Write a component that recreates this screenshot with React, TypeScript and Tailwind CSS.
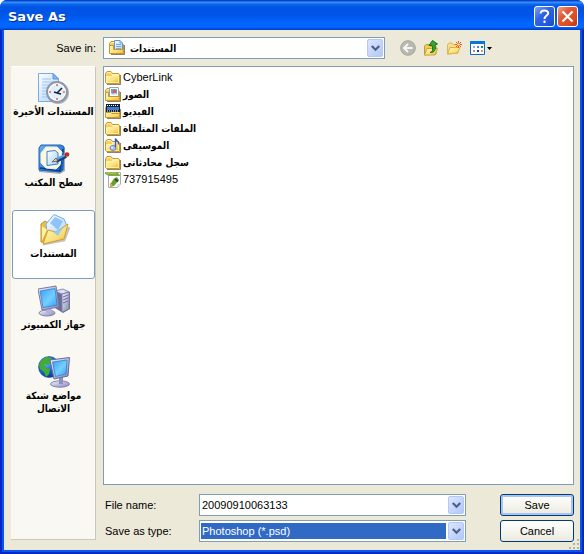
import React from "react";

const UI = "font-['Liberation_Sans','DejaVu_Sans',sans-serif]";
const ARABIC = "font-['DejaVu_Sans_Condensed','DejaVu_Sans',sans-serif] font-bold text-[10px]";

function Gradients() {
  return (
    <svg width="0" height="0" className="absolute" aria-hidden="true">
      <defs>
        <linearGradient id="folder" x1="0" y1="0" x2="1" y2="1">
          <stop offset="0" stopColor="#fff8c4" />
          <stop offset="0.6" stopColor="#fbe078" />
          <stop offset="1" stopColor="#e9b53a" />
        </linearGradient>
        <linearGradient id="paper" x1="0" y1="0" x2="1" y2="1">
          <stop offset="0" stopColor="#ffffff" />
          <stop offset="1" stopColor="#a9d0fa" />
        </linearGradient>
        <linearGradient id="screen" x1="0" y1="0" x2="1" y2="1">
          <stop offset="0" stopColor="#3d9cf5" />
          <stop offset="0.55" stopColor="#72d0ff" />
          <stop offset="1" stopColor="#3a9df2" />
        </linearGradient>
        <linearGradient id="casing" x1="0" y1="0" x2="1" y2="1">
          <stop offset="0" stopColor="#f4f4ff" />
          <stop offset="1" stopColor="#8284b8" />
        </linearGradient>
        <linearGradient id="desk" x1="0" y1="0" x2="1" y2="1">
          <stop offset="0" stopColor="#69adf0" />
          <stop offset="1" stopColor="#0b5dbd" />
        </linearGradient>
        <radialGradient id="globe" cx="0.35" cy="0.3" r="0.75">
          <stop offset="0" stopColor="#65b8ff" />
          <stop offset="0.6" stopColor="#165fd0" />
          <stop offset="1" stopColor="#08358c" />
        </radialGradient>
      </defs>
    </svg>
  );
}

function FolderBase() {
  return (
    <>
      <path d="M2 14.5H15.5V5" fill="none" stroke="#6b5a30" strokeWidth="1" opacity="0.75" />
      <path d="M.5 12.5V3.5L2 1.5H6L7.5 3.5H13.5L14.5 4.5V13.5H1.5Z" fill="#f5cf60" stroke="#c8962b" />
      <path d="M2 3.5 2.7 2.5H5.6L7 4.5H13" fill="none" stroke="#fff4b8" />
      <path d="M1.5 12.5V6.5H6.5L7.5 5.5H13.5V12.5Z" fill="url(#folder)" stroke="#fff1a5" />
    </>
  );
}

function FolderFront() {
  return (
    <path d="M.5 8.5H5.5L6.5 9.5H14.5V13.5H.5Z" fill="url(#folder)" stroke="#c8962b" />
  );
}

type Kind = "folder" | "documents" | "pictures" | "video" | "music" | "file";

function SmallIcon({ kind }: { kind: Kind }) {
  return (
    <svg width="16" height="16" viewBox="0 0 16 16" aria-hidden="true" className="shrink-0">
      {kind !== "file" && <FolderBase />}
      {kind === "documents" && (
        <>
          <path d="M5.5 10.5V.5H11L13.5 3V10.5Z" fill="url(#paper)" stroke="#5e96d8" />
          <path d="M11 .5V3H13.5M7 4.5H12M7 6.5H12M7 8.5H12" fill="none" stroke="#75aae4" />
          <path d="M.5 13.5V5.5H4.5V9.5H14.5V13.5Z" fill="url(#folder)" stroke="#c8962b" />
        </>
      )}
      {kind === "pictures" && (
        <>
          <path d="M4.5.5H13.5V9.5H4.5Z" fill="#fff" stroke="#9aa3b5" />
          <path d="M6 2H12V8H6Z" fill="#58a9ed" />
          <circle cx="9.5" cy="4.5" r="1.8" fill="#ec5736" />
          <path d="M6 8V6L8 7L10 6L12 7V8Z" fill="#d6eeff" />
          <path d="M.5 13.5V5.5H3.5V9.5H14.5V13.5Z" fill="url(#folder)" stroke="#c8962b" />
        </>
      )}
      {kind === "video" && (
        <>
          <path d="M1 0H15V8H1Z" fill="#17202e" />
          <path d="M2 3H14V6H2Z" fill="#3f79d3" />
          <path d="M2 1.5H14M2 7H14" stroke="#fff" strokeDasharray="1 1" />
          <FolderFront />
        </>
      )}
      {kind === "music" && (
        <>
          <ellipse cx="8" cy="10" rx="3" ry="2.5" fill="#a9bff2" stroke="#5372c9" strokeWidth=".8" />
          <circle cx="7" cy="9.5" r="1" fill="#eef3ff" />
          <path d="M10.5 9V.5C11 3 14.5 3 13.5 6.5" fill="none" stroke="#3759bb" strokeWidth="1.4" />
        </>
      )}
      {kind === "file" && (
        <>
          <path d="M3.5 15.5V.5H15.5V12L12.5 15.5Z" fill="#fff" stroke="#a7aeb0" />
          <path d="M0 0H12L15 3V4H4L0 2Z" fill="#84a83b" />
          <path d="M1 1H11" stroke="#b7cf7d" />
          <path d="M5 12.5 9 6.5 12 5 14 8 9 14 5 15Z" fill="#6c9c32" />
          <path d="M5 11 8 13 5 15Z" fill="#e9a53a" />
          <path d="M10 7 13 9.5" stroke="#1d542b" strokeWidth="2" />
          <path d="M12 15.5V12.5H15.5Z" fill="#d7dcdc" />
        </>
      )}
    </svg>
  );
}

type Place = "recent" | "desktop" | "documents" | "computer" | "network";

function PlaceIcon({ kind }: { kind: Place }) {
  return (
    <svg width="32" height="32" viewBox="0 0 32 32" aria-hidden="true" className="shrink-0">
      {kind === "recent" && (
        <>
          <path d="M.5 29.5V1.5H15L20.5 7V29.5Z" fill="url(#paper)" stroke="#7eaae7" />
          <path d="M15 1.5V7H20.5Z" fill="#80b5f6" stroke="#5e92dc" />
          <path d="M4 7H13M4 10H17M4 13H13M4 16H10M4 19H9M4 22H9M4 25H11" stroke="#9fc4ee" />
          <circle cx="20" cy="21" r="11" fill="#777b80" opacity=".55" />
          <circle cx="19" cy="20" r="10" fill="#f6fbff" stroke="#8b99aa" strokeWidth="2" />
          <circle cx="19" cy="20" r="8" fill="#e1effc" stroke="#fff" />
          <path d="M19 12V14M19 26V28M11 20H13M25 20H27" stroke="#ef6a3b" strokeWidth="1.6" />
          <path d="M24 16 19 21 16 20M19 21 23 22" fill="none" stroke="#15202b" strokeWidth="1.5" />
        </>
      )}
      {kind === "desktop" && (
        <>
          <path d="M4 2H25L27 5V28L22 31L1 29V5Z" fill="#44516b" opacity=".45" />
          <path d="M3 2H23L26 4L25 27L22 29L1 27V5Z" fill="url(#desk)" stroke="#1c61b3" />
          <path d="M2 25 22 28 25 6" fill="none" stroke="#083e91" strokeWidth="1.5" />
          <path d="M8 4H19L24 9L22 22L18 26L8 25L3 20V10Z" fill="#fff7d5" stroke="#e3efff" />
          <path d="M9 8.5 17 7.5 20 10V21L9 22.5Z" fill="url(#paper)" stroke="#3483d0" />
          <path d="M18 18 28 13" stroke="#183f7a" strokeWidth="4" />
          <path d="M18 16.5 28 11.5" stroke="#569fe8" strokeWidth="2.4" />
          <path d="M14 19 18 15 20 18Z" fill="#f7ca76" stroke="#39465b" strokeWidth=".7" />
          <circle cx="29" cy="11.5" r="2.3" fill="#c92720" />
        </>
      )}
      {kind === "documents" && (
        <>
          <path d="M5 30 26 26 31 13" fill="none" stroke="#6b6650" strokeWidth="3" opacity=".4" />
          <path d="M3 28 3 10 7 7 12 10 23 8 25 25Z" fill="#edbd4b" stroke="#bd8b2a" />
          <path d="M8 10 16 .5 26 5 29 12 21 24 9 18Z" fill="url(#paper)" stroke="#6eacec" />
          <path d="M12 9 17 3 25 7 20 16Z" fill="#76b7f5" opacity=".75" />
          <path d="M5 30 10 16 18 18 30 10 26 25Z" fill="url(#folder)" stroke="#d39e31" />
          <path d="M15 18 25 14 20 22Z" fill="#8fc8ff" opacity=".9" />
          <path d="M3.5 12V29L9.5 16" fill="#fff0a0" stroke="#d8aa3d" />
        </>
      )}
      {kind === "computer" && (
        <>
          <path d="M17 6 25 4 32 7V24L25 28L17 23Z" fill="#6c6d94" />
          <path d="M17 6 25 4 31 7 24 9Z" fill="#dddff6" stroke="#9294bd" />
          <path d="M24 9 31 7V24L24 27Z" fill="url(#casing)" stroke="#7f80aa" />
          <path d="M25 12 30 10M25 15 30 13M25 18 30 16" stroke="#6f719a" />
          <circle cx="29" cy="22" r="1.1" fill="#72df38" />
          <ellipse cx="9" cy="28" rx="8" ry="3" fill="url(#casing)" stroke="#8587ac" />
          <path d="M8 21H14L13 28H8Z" fill="#b1b4da" />
          <path d="M0 4 18 1 21 22 4 25Z" fill="url(#casing)" stroke="#7779a3" />
          <path d="M2 6 17 3.5 19 20 5 22.5Z" fill="url(#screen)" stroke="#247ad1" strokeWidth=".7" />
        </>
      )}
      {kind === "network" && (
        <>
          <circle cx="11" cy="11" r="10.5" fill="url(#globe)" stroke="#17458c" strokeWidth=".6" />
          <path d="M3 5 8 1 14 2 11 5 13 7 9 9 6 8 8 12 12 13 11 18 8 21 6 16 2 13 1 9Z" fill="#43ad31" />
          <path d="M14 3 18 5 17 8 14 7Z" fill="#247b24" />
          <ellipse cx="22" cy="28" rx="9.5" ry="3.2" fill="url(#casing)" stroke="#8284ad" />
          <path d="M21 20H25V28H21Z" fill="#8f91bd" />
          <path d="M12 4 31.5 1.5 30 20 16 23Z" fill="url(#casing)" stroke="#686b91" />
          <path d="M14.5 6 29 4 28 18 17.5 20.5Z" fill="url(#screen)" stroke="#2379cf" strokeWidth=".7" />
        </>
      )}
    </svg>
  );
}

function DropArrow({ className = "" }: { className?: string }) {
  return (
    <span
      className={`flex w-4 items-center justify-center rounded-[2px] border border-[#b5c7f5] bg-linear-to-br from-[#dce6ff] to-[#b2c7f7] ${className}`}
    >
      <svg width="9" height="7" viewBox="0 0 9 7" aria-hidden="true">
        <path d="M.8 1 4.5 4.7 8.2 1" fill="none" stroke="#4d6185" strokeWidth="2.2" />
      </svg>
    </span>
  );
}

const places: { kind: Place; label: string }[] = [
  { kind: "recent", label: "المستندات الأخيرة" },
  { kind: "desktop", label: "سطح المكتب" },
  { kind: "documents", label: "المستندات" },
  { kind: "computer", label: "جهاز الكمبيوتر" },
  { kind: "network", label: "مواضع شبكة الاتصال" },
];

const files: { kind: Kind; label: string; latin?: boolean }[] = [
  { kind: "folder", label: "CyberLink", latin: true },
  { kind: "pictures", label: "الصور" },
  { kind: "video", label: "الفيديو" },
  { kind: "folder", label: "الملفات المتلقاة" },
  { kind: "music", label: "الموسيقى" },
  { kind: "folder", label: "سجل محادثاتى" },
  { kind: "file", label: "737915495", latin: true },
];

function TitleBar() {
  return (
    <header className="flex h-[30px] shrink-0 items-center bg-[linear-gradient(180deg,#0842c8_0%,#0842c8_3%,#3d95ff_7%,#0b68ee_14%,#0054e3_24%,#0055e8_50%,#0066ff_78%,#0066ff_90%,#0048d2_97%,#003dc4_100%)] pr-[6px] pl-2 pt-[2px]">
      <h1 className="flex-1 pt-[2px] font-['DejaVu_Sans',sans-serif] text-[13px] leading-4 font-bold text-white [text-shadow:1px_1px_#0a2a80]">
        Save As
      </h1>
      <div className="flex gap-[2px]">
        <button
          type="button"
          aria-label="Help"
          className="flex size-[21px] items-center justify-center rounded-[3px] border border-white bg-[linear-gradient(135deg,#7ea5f8,#3064e4_40%,#2458dc_75%,#1747b8)]"
        >
          <svg width="11" height="15" viewBox="0 0 11 15" aria-hidden="true">
            <path d="M1.7 4.5C1.7.5 9.2.5 9.2 4.2 9.2 6.5 5.5 6.5 5.5 10M5.5 11.5V14" fill="none" stroke="#fff" strokeWidth="2" />
          </svg>
        </button>
        <button
          type="button"
          aria-label="Close"
          className="flex size-[21px] items-center justify-center rounded-[3px] border border-white bg-[linear-gradient(135deg,#f2a38a,#e25a36_35%,#dc4a1e_75%,#b8330f)]"
        >
          <svg width="13" height="13" viewBox="0 0 13 13" aria-hidden="true">
            <path d="M1.5 1.5 11.5 11.5M11.5 1.5 1.5 11.5" stroke="#fff" strokeWidth="2.2" />
          </svg>
        </button>
      </div>
    </header>
  );
}

function Tools() {
  return (
    <div className="flex w-[182px] shrink-0 items-center gap-[7px] pl-2">
      <button type="button" aria-label="Back">
        <svg width="16" height="16" viewBox="0 0 16 16" aria-hidden="true">
          <circle cx="8" cy="8" r="7.3" fill="#b9b8b1" stroke="#a3a298" />
          <path d="M12.5 8H4.5M8 4 4 8 8 12" fill="none" stroke="#f5f4ee" strokeWidth="2" />
        </svg>
      </button>
      <button type="button" aria-label="Up one level">
        <svg width="16" height="16" viewBox="0 0 16 16" aria-hidden="true">
          <path d="M1.5 15V6L3 4.5H6L7 6H13V14Z" fill="#f0cb56" stroke="#c7982e" />
          <path d="M1.5 15 4 8.5H14.5L12 15Z" fill="url(#folder)" stroke="#d0a136" />
          <path d="M7 12.5C10 12 10 9 9.2 5.5H6L9.5.5 14.5 4 12 5C13 9 12 13 7 12.5Z" fill="#35a82b" stroke="#14701a" />
        </svg>
      </button>
      <button type="button" aria-label="Create new folder">
        <svg width="16" height="16" viewBox="0 0 16 16" aria-hidden="true">
          <path d="M1.5 14V4.5L3 3H6L7 4.5H12V13Z" fill="#f6dc86" stroke="#dcb85c" />
          <path d="M1.5 14 4 7.5H14L11.5 13Z" fill="url(#folder)" stroke="#dbb044" />
          <path d="M12.5 1V8M9 4.5H16M10 2 15 7M15 2 10 7" stroke="#ed5432" strokeWidth="1" />
          <circle cx="12.5" cy="4.5" r="1.3" fill="#ffe65c" />
        </svg>
      </button>
      <button type="button" aria-label="View menu" className="flex items-center gap-[2px]">
        <svg width="16" height="15" viewBox="-1 0 16 15" aria-hidden="true">
          <path d="M.5.5H14.5V13.5H.5Z" fill="#fbfcff" stroke="#0b6ccf" />
          <path d="M0 0H15V3H0Z" fill="#0b73dc" />
          <path d="M3 5H5V7H3Z" fill="#a6a6cc" />
          <path d="M7 5H9V7H7Z" fill="#4a85d9" />
          <path d="M11 5H13V7H11Z" fill="#24943a" />
          <path d="M3 9H5V11H3Z" fill="#ef7d59" />
          <path d="M7 9H9V11H7Z" fill="#123f9c" />
          <path d="M11 9H13V11H11Z" fill="#d9a126" />
        </svg>
        <svg width="5" height="3" viewBox="0 0 5 3" aria-hidden="true">
          <path d="M0 0H5L2.5 3Z" fill="#000" />
        </svg>
      </button>
    </div>
  );
}

const buttonBase =
  "h-[22px] w-[74px] rounded-[3px] border border-[#003c74] bg-linear-to-b from-white to-[#eceade] leading-none";

export default function App() {
  return (
    <div className="bg-white">
      <Gradients />
      <div className={`relative flex min-h-screen flex-col overflow-hidden rounded-t-[7px] bg-[#0046e8] text-[11px] text-black ${UI}`}>
        <TitleBar />
        <main className="flex flex-1 flex-col border-x-2 border-b-2 border-[#0528c4]">
          <form
            onSubmit={(event) => event.preventDefault()}
            className="flex flex-1 flex-col border-x-2 border-b-2 border-[#0855f0] bg-[#ece9d8] pt-[7px] pr-[6px] pl-[7px]"
          >
            <div className="flex h-[22px] shrink-0 items-center gap-[7px]">
              <label htmlFor="location" className="w-[85px] text-right">
                Save in:
              </label>
              <div className="relative flex h-[22px] flex-1">
                <select
                  id="location"
                  className={`w-full appearance-none border border-[#7f9db9] bg-white pl-[26px] ${ARABIC}`}
                >
                  <option>المستندات</option>
                </select>
                <span className="pointer-events-none absolute top-[3px] left-[6px]">
                  <SmallIcon kind="documents" />
                </span>
                <DropArrow className="pointer-events-none absolute inset-y-[2px] right-[2px]" />
              </div>
              <Tools />
            </div>

            <div className="flex flex-1 gap-[7px] pt-[7px]">
              <nav
                aria-label="Places"
                className="mb-[10px] flex w-[85px] shrink-0 flex-col gap-[2px] border-t border-r border-b border-t-white border-r-[#cbc7b8] border-b-[#cbc7b8] bg-[#f9f8f3] pl-px pt-px"
              >
                {places.map((place) => (
                  <button
                    key={place.kind}
                    type="button"
                    dir="rtl"
                    className={`flex min-h-[69px] w-full flex-col items-center gap-px rounded-[3px] border pt-[3px] leading-[13px] ${ARABIC} ${
                      place.kind === "documents" ? "border-[#7a9ebf] bg-white" : "border-transparent"
                    }`}
                  >
                    <PlaceIcon kind={place.kind} />
                    <span className={place.kind === "network" ? "px-1" : "whitespace-nowrap"}>{place.label}</span>
                  </button>
                ))}
              </nav>

              <div className="flex min-w-0 flex-1 flex-col">
                <ul aria-label="Files" className="flex-1 border border-[#7f9db9] bg-white pt-[2px] pl-px">
                  {files.map((file) => (
                    <li key={file.label}>
                      <button type="button" className="flex h-[17px] items-center gap-[2px]">
                        <SmallIcon kind={file.kind} />
                        <span className={file.latin ? "" : ARABIC}>{file.label}</span>
                      </button>
                    </li>
                  ))}
                </ul>

                <div className="grid grid-cols-[94px_1fr_74px] items-center gap-y-1 pt-[9px] pb-2 pl-[2px]">
                  <label htmlFor="file-name">File name:</label>
                  <div className="mr-[34px] flex h-[22px] border border-[#7f9db9] bg-white p-px">
                    <input id="file-name" defaultValue="20090910063133" className="min-w-0 flex-1 pl-px outline-none" />
                    <button type="button" aria-label="Recent file names" className="flex">
                      <DropArrow />
                    </button>
                  </div>
                  <button
                    type="submit"
                    className={`${buttonBase} shadow-[inset_0_0_0_2px_#a9c3f5]`}
                  >
                    Save
                  </button>

                  <label htmlFor="file-type">Save as type:</label>
                  <div className="relative mr-[34px] flex h-[22px] border border-[#7f9db9] bg-white py-[2px] pr-[19px] pl-px">
                    <select id="file-type" className="w-full appearance-none bg-[#316ac5] pl-px text-white">
                      <option>Photoshop (*.psd)</option>
                    </select>
                    <DropArrow className="pointer-events-none absolute inset-y-px right-px" />
                  </div>
                  <button type="button" className={buttonBase}>
                    Cancel
                  </button>
                </div>
              </div>
            </div>
          </form>
        </main>
        <svg width="12" height="12" viewBox="0 0 12 12" aria-hidden="true" className="pointer-events-none absolute right-1 bottom-1">
          <path d="M9 1H11V3H9ZM5 5H7V7H5ZM9 5H11V7H9ZM1 9H3V11H1ZM5 9H7V11H5ZM9 9H11V11H9Z" fill="#b8b4a2" />
        </svg>
      </div>
    </div>
  );
}
